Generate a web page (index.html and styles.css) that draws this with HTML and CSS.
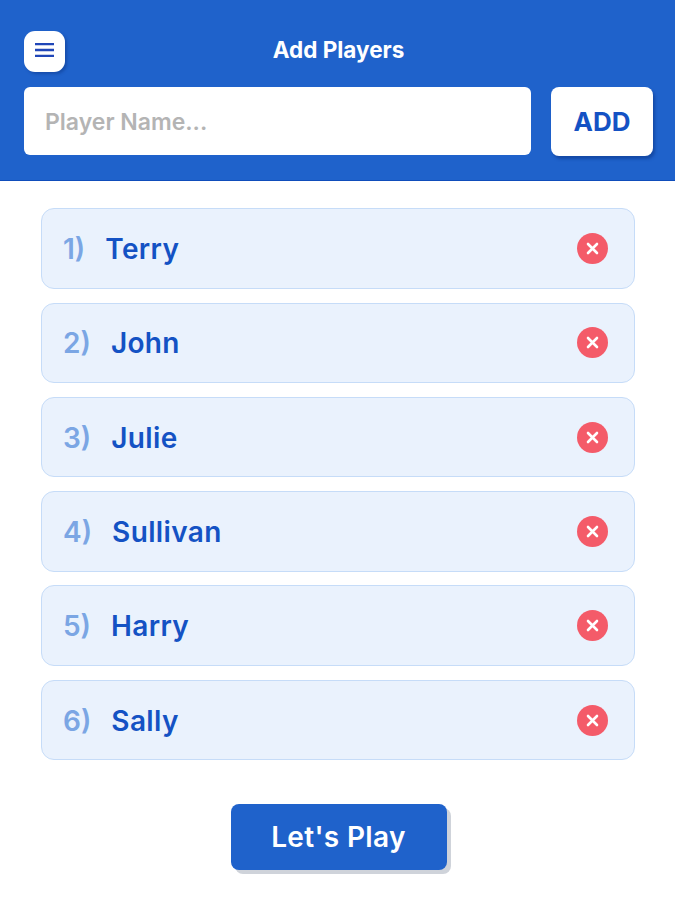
FILE: index.html
```html
<!DOCTYPE html>
<html lang="en">
<head>
<meta charset="utf-8">
<title>Add Players</title>
<link rel="stylesheet" href="styles.css">
</head>
<body>
<div class="app">
  <header class="header">
    <div class="topbar">
      <button class="menu-btn" aria-label="Menu">
        <svg class="menu-icon" viewBox="0 0 19 14"><path d="M0 1h19M0 7h19M0 13h19"/></svg>
      </button>
      <h1 class="title">Add Players</h1>
    </div>
    <div class="add-row">
      <div class="name-input">Player Name...</div>
      <button class="add-btn">ADD</button>
    </div>
  </header>
  <main class="players">
    <div class="player"><span class="num">1)</span><span class="name">Terry</span><svg class="remove" viewBox="0 0 31 31"><circle cx="15.5" cy="15.5" r="15.5"/><path d="M11 11l9 9M20 11l-9 9"/></svg></div>
    <div class="player"><span class="num">2)</span><span class="name">John</span><svg class="remove" viewBox="0 0 31 31"><circle cx="15.5" cy="15.5" r="15.5"/><path d="M11 11l9 9M20 11l-9 9"/></svg></div>
    <div class="player"><span class="num">3)</span><span class="name">Julie</span><svg class="remove" viewBox="0 0 31 31"><circle cx="15.5" cy="15.5" r="15.5"/><path d="M11 11l9 9M20 11l-9 9"/></svg></div>
    <div class="player"><span class="num">4)</span><span class="name">Sullivan</span><svg class="remove" viewBox="0 0 31 31"><circle cx="15.5" cy="15.5" r="15.5"/><path d="M11 11l9 9M20 11l-9 9"/></svg></div>
    <div class="player"><span class="num">5)</span><span class="name">Harry</span><svg class="remove" viewBox="0 0 31 31"><circle cx="15.5" cy="15.5" r="15.5"/><path d="M11 11l9 9M20 11l-9 9"/></svg></div>
    <div class="player"><span class="num">6)</span><span class="name">Sally</span><svg class="remove" viewBox="0 0 31 31"><circle cx="15.5" cy="15.5" r="15.5"/><path d="M11 11l9 9M20 11l-9 9"/></svg></div>
  </main>
  <div class="footer">
    <button class="play-btn">Let's Play</button>
  </div>
</div>
</body>
</html>
```

FILE: styles.css
```css
* { box-sizing: border-box; }
html, body { margin: 0; padding: 0; }
body { background: #fff; font-family: "Inter", "Liberation Sans", sans-serif; width: 675px; height: 900px; overflow: hidden; }
button { font-family: inherit; border: 0; padding: 0; }

.header {
  height: 181px;
  padding: 31px 22px 0 24px;
  background: #1f62cb;
  border-bottom: 1px solid #0f4dbb;
}
.topbar { display: grid; grid-template-columns: 41px 1fr 41px; align-items: center; height: 41px; }
.menu-btn {
  width: 41px; height: 41px;
  display: flex; align-items: center; justify-content: center;
  background: #fff;
  border-radius: 11px;
  box-shadow: 2px 2px 3px rgba(10, 50, 130, .45);
}
.menu-icon { width: 19px; height: 14px; margin-bottom: 3px; }
.menu-icon path { fill: none; stroke: #2046b8; stroke-width: 2.4; }
.title { margin: 0 0 3px; text-align: center; color: #fff; font-size: 22.5px; font-weight: 700; line-height: 38px; }

.add-row { display: flex; gap: 20px; margin-top: 15px; align-items: flex-start; }
.name-input {
  flex: 1; height: 68px;
  padding: 2px 0 0 21px;
  display: flex; align-items: center;
  background: #fff;
  border-radius: 6px;
  color: #b4b4b4;
  font-size: 23px; font-weight: 600;
}
.add-btn {
  width: 102px; height: 69px;
  background: #fff;
  border-radius: 8px;
  color: #1452c4;
  font-size: 26px; font-weight: 700;
  box-shadow: 2px 3px 3px rgba(10, 50, 130, .5);
}

.players { display: flex; flex-direction: column; gap: 13.7px; padding: 27.3px 40px 0 41px; }
.player {
  height: 80.6px;
  padding: 0 26px 0 21px;
  display: flex; align-items: center;
  background: #eaf2fd;
  border: 1px solid #c6dcf8;
  border-radius: 13px;
  font-size: 28px; font-weight: 600;
}
.num { color: #7ba6e4; margin: 1px 20px 0 0; }
.name { color: #1452c4; flex: 1; margin-top: 1px; letter-spacing: .35px; }
.remove { width: 31px; height: 31px; }
.remove circle { fill: #f45b69; }
.remove path { fill: none; stroke: #fff; stroke-width: 2.6; stroke-linecap: round; }

.footer { display: flex; justify-content: center; margin-top: 43.6px; padding-left: 2px; }
.play-btn {
  width: 216px; height: 66px;
  background: #1f62cb;
  border-radius: 8px;
  color: #fff;
  font-size: 28px; font-weight: 600;
  letter-spacing: .35px;
  box-shadow: 4px 4px 0 #cfd3da;
}
```
